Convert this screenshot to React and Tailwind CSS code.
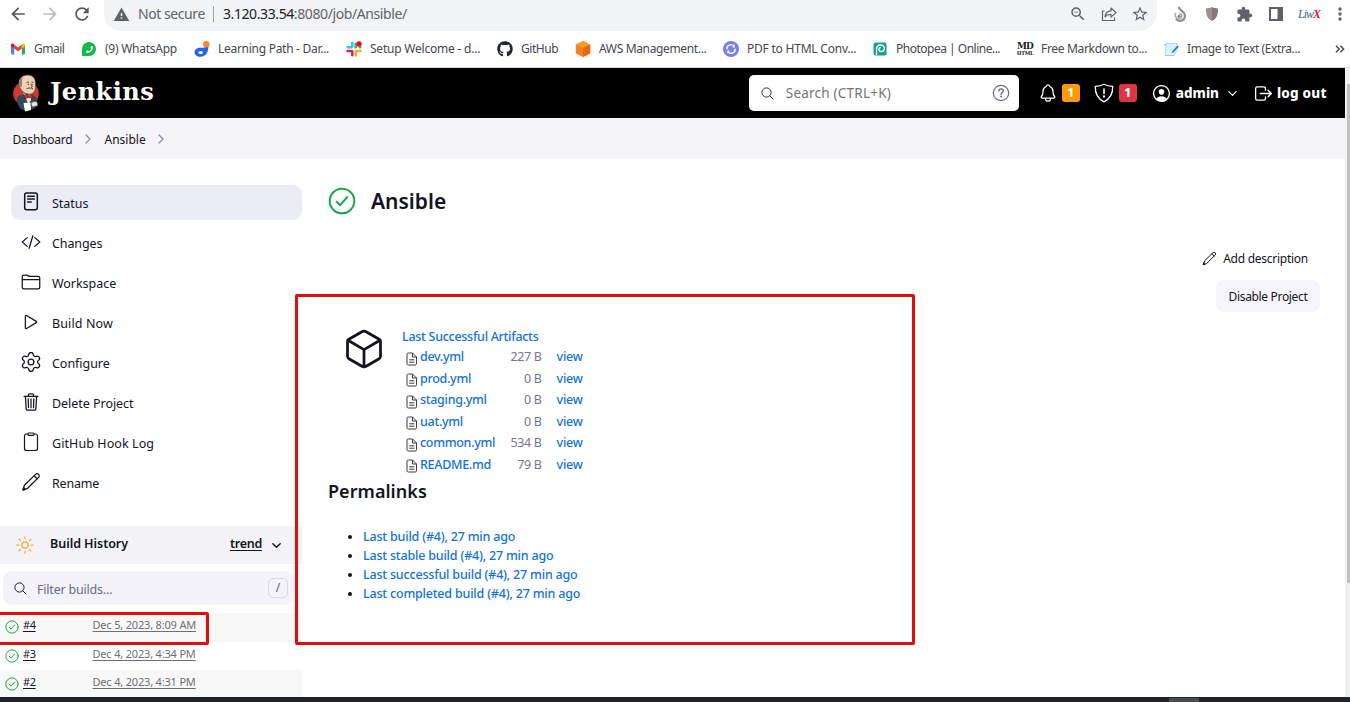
import React from "react";
import {
  IoCodeSlashOutline,
  IoFolderOutline,
  IoPlayOutline,
  IoTrashOutline,
  IoSunnyOutline,
  IoSearchOutline,
  IoNotificationsOutline,
  IoPersonCircleOutline,
  IoChevronDownOutline,
  IoChevronForwardOutline,
  IoLogOutOutline,
  IoCubeOutline,
} from "react-icons/io5";
import {
  MdArrowBack,
  MdArrowForward,
  MdRefresh,
  MdWarning,
  MdZoomOut,
  MdStarBorder,
  MdMoreVert,
  MdExtension,
} from "react-icons/md";
import { FaGithub, FaPhoneAlt } from "react-icons/fa";
import { Settings } from "lucide-react";

/* ---------- browser icons ---------- */

const ShareIcon = () => (
  <svg viewBox="0 0 16 16" className="size-4" fill="none" stroke="#5f6368" strokeWidth="1.2">
    <path d="M3.500 5H1.500v9.500h12V11.500" />
    <path d="M4 10.800C4.400 7 6.600 5 10 4.800V2l5 4.600-5 4.500V8.400C7.300 8.300 5.400 9 4 10.800Z" strokeLinejoin="round" />
  </svg>
);

const SwirlIcon = () => (
  <svg viewBox="0 0 16 16" className="size-4" fill="none" strokeLinecap="round">
    <path d="M7 1.500c0 2.500 6 4 6 8.500a5 5 0 0 1-8.500 3.500" stroke="#8f9193" strokeWidth="2.200" />
    <path d="M3.500 7.500a4 4 0 0 0 2.500 5.200 3 3 0 0 0 4-2.700 2.300 2.300 0 0 0-2.600-2" stroke="#a7a9ab" strokeWidth="1.500" />
    <circle cx="7.200" cy="10.300" r="1.400" fill="#77797b" />
  </svg>
);

const UblockIcon = () => (
  <svg viewBox="0 0 16 16" className="size-4">
    <path d="M8 1c2 1 4 1.300 6 1.400 0 6-.8 9.600-6 12.600Z" fill="#85787a" />
    <path d="M8 1C6 2 4 2.300 2 2.400c0 6 .8 9.600 6 12.600Z" fill="#9c8f90" />
  </svg>
);

const SidePanelIcon = () => (
  <svg viewBox="0 0 14 14" className="size-3.5">
    <path fillRule="evenodd" d="M0 0h14v14H0ZM2 2v10h6.500V2Z" fill="#5f6368" />
  </svg>
);

const GmailIcon = () => (
  <svg viewBox="0 0 16 16" className="size-4">
    <path d="M1 4.500v8c0 .5.400.9.900.9H4.200V7Z" fill="#4285f4" />
    <path d="M15 4.500v8c0 .5-.4.9-.9.9h-2.300V7Z" fill="#34a853" />
    <path d="M11.800 4v3.500L15 5.200V4c0-1.300-1.400-1.900-2.400-1.200Z" fill="#fbbc04" />
    <path d="M4.200 7.500V3.600L8 6.500l3.800-2.900v3.900L8 10.400Z" fill="#ea4335" />
    <path d="M1 4v1.200l3.200 2.300V3.600L3.400 2.800C2.400 2.100 1 2.700 1 4Z" fill="#c5221f" />
  </svg>
);

const WhatsAppIcon = () => (
  <span className="flex size-[14px] items-center justify-center rounded-full rounded-bl-[3px] bg-[#12b84a]">
    <FaPhoneAlt className="size-[7px] -scale-x-100 text-white" />
  </span>
);

const LearningIcon = () => (
  <svg viewBox="0 0 16 16" className="size-4">
    <path d="M14.400 4.500c.2 6-2 11.200-8 11.300C3 15.800.5 14 .5 11.300S3 6.800 6.600 6.800c4 0 6-.6 7.800-2.300Z" fill="#2563eb" />
    <circle cx="12.300" cy="3.200" r="3.200" fill="#fb8332" />
    <ellipse cx="6.600" cy="11.500" rx="2.300" ry="1.500" fill="#fff" />
  </svg>
);

const SlackIcon = () => (
  <svg viewBox="0 0 16 16" className="size-4" strokeWidth="2.600" strokeLinecap="round">
    <path d="M6.300 1.800v3.700M1.500 6.200h4" stroke="#36c5f0" />
    <path d="M9.700 3V6.200M14 6.200h.3" stroke="#2eb67d" />
    <path d="M1.500 10h4.300M6.300 10.500v3.700" stroke="#e01e5a" />
    <path d="M10 10h4.500M10 10v4.500" stroke="#ecb22e" />
    <circle cx="13" cy="3" r="2.700" fill="#f20d0d" />
  </svg>
);

const CubeIcon = () => (
  <svg viewBox="0 0 16 16" className="size-4">
    <path d="M8 0l7.200 3.500v9L8 16 .8 12.500v-9Z" fill="#f58220" />
    <path d="M8 0l7.200 3.500L8 6.800.8 3.500Z" fill="#fb9c2d" />
    <path d="M8 6.800l7.200-3.300v9L8 16Z" fill="#e8661b" />
  </svg>
);

const ConvertIcon = () => (
  <svg viewBox="0 0 16 16" className="size-4" fill="none">
    <circle cx="8" cy="8" r="8" fill="#7a7ff0" />
    <path d="M3.800 8.300A4.200 4.200 0 0 1 11 5M12.200 7.700A4.200 4.200 0 0 1 5 11" stroke="#fff" strokeWidth="1.400" />
    <path d="M11.800 3.400v3H9ZM4.200 12.600v-3H7Z" fill="#fff" />
  </svg>
);

const PhotopeaIcon = () => (
  <svg viewBox="0 0 16 16" className="size-4" fill="none">
    <rect x="1.500" y="1.500" width="13" height="13" rx="2" fill="#18a085" />
    <path d="M4.500 14V8.500C4.500 5.700 6.200 4 8.600 4c2.300 0 3.700 1.500 3.700 3.400 0 1.800-1.300 3.100-3 3.100-1.500 0-2.400-1-2.400-2.200 0-1 .7-1.800 1.800-1.800" stroke="#fff" strokeWidth="1.300" />
  </svg>
);

const MarkdownIcon = () => (
  <span className="flex size-4 flex-col items-center justify-center font-['DejaVu_Serif',serif] font-bold text-[#222]">
    <span className="text-[9px] leading-[9px] tracking-[-0.8px]">MD</span>
    <span className="text-[5px] leading-[5px] tracking-[-0.3px]">HTML</span>
  </span>
);

const NoteIcon = () => (
  <svg viewBox="0 0 16 16" className="size-4">
    <path d="M3 2.500h11v7l-3 5H2Z" fill="#d9f3fb" stroke="#8fdcf2" strokeWidth=".8" />
    <path d="M1 3.500h3M2 14.500h9" stroke="#7fd6f0" />
    <path d="M14.500 4.500l-5 5.500-.8 2 2-.8 5-5.500Z" fill="#2a6fd6" />
  </svg>
);

const bookmarks = [
  { label: "Gmail", Icon: GmailIcon, width: "w-[71px]", track: "tracking-[-0.5px]" },
  { label: "(9) WhatsApp", Icon: WhatsAppIcon, width: "w-[113px]", track: "tracking-[-0.25px]" },
  { label: "Learning Path - Dar...", Icon: LearningIcon, width: "w-[152px]", track: "tracking-[-0.28px]" },
  { label: "Setup Welcome - d...", Icon: SlackIcon, width: "w-[151px]", track: "tracking-[-0.22px]" },
  { label: "GitHub", Icon: () => <FaGithub className="size-4 text-[#24292f]" />, width: "w-[78px]", track: "tracking-[-0.45px]" },
  { label: "AWS Management...", Icon: CubeIcon, width: "w-[148px]", track: "tracking-[-0.35px]" },
  { label: "PDF to HTML Conv...", Icon: ConvertIcon, width: "w-[149px]", track: "tracking-[-0.22px]" },
  { label: "Photopea | Online...", Icon: PhotopeaIcon, width: "w-[145px]", track: "tracking-[-0.5px]" },
  { label: "Free Markdown to...", Icon: MarkdownIcon, width: "w-[146px]", track: "tracking-[-0.32px]" },
  { label: "Image to Text (Extra...", Icon: NoteIcon, width: "w-[172px]", track: "tracking-[-0.4px]" },
];

function BrowserChrome() {
  return (
    <div className="flex h-[68px] shrink-0 flex-col border-b border-[#d5d7da] bg-white text-[#5f6368]">
      <div className="flex h-[31px]">
        <div className="flex w-[104px] items-center pb-[3px] pl-2 text-[20px]">
          <MdArrowBack className="text-[#54575b]" />
          <MdArrowForward className="ml-3 text-[#babcbe]" />
          <MdRefresh className="ml-3 text-[#54575b]" />
        </div>
        <div className="flex w-[1054px] items-center rounded-b-[18px] bg-[#f1f3f4] pb-[3px] pl-[9px] text-[14px]">
          <MdWarning className="size-[17px]" />
          <span className="ml-2 w-[67px] pb-px whitespace-nowrap tracking-[-0.42px]">Not secure</span>
          <span className="ml-2 h-4 w-px bg-[#9aa0a6]" />
          <span className="ml-[9px] pb-px whitespace-nowrap tracking-[-0.4px]">
            <span className="text-[#202124]">3.120.33.54</span>:8080/job/Ansible/
          </span>
          <div className="mr-2 ml-auto flex items-center gap-[14px]">
            <MdZoomOut className="size-[18px]" />
            <ShareIcon />
            <MdStarBorder className="size-[18px]" />
          </div>
        </div>
        <div className="flex items-center pb-[3px] pl-[15px]">
          <SwirlIcon />
          <span className="ml-4"><UblockIcon /></span>
          <MdExtension className="ml-4 size-[17px]" />
          <span className="ml-4"><SidePanelIcon /></span>
          <span className="ml-3.5 w-6 text-center font-['Liberation_Serif',serif] text-[12px] leading-4 tracking-[-1px] italic">
            <span className="text-[#35648f]">Liw</span>
            <span className="font-bold text-[#e0203c]">X</span>
          </span>
          <MdMoreVert className="ml-[9px] size-[20px] shrink-0" />
        </div>
      </div>
      <div className="flex h-9 items-center pl-[10px] text-[12px] text-[#45484c]">
        {bookmarks.map(({ label, Icon, width, track }) => (
          <div key={label} className={`flex shrink-0 items-center gap-2 ${width}`}>
            <span className="flex size-4 shrink-0 items-center justify-center"><Icon /></span>
            <span className={`whitespace-nowrap ${track}`}>{label}</span>
          </div>
        ))}
        <svg viewBox="0 0 10 8" className="h-2 w-2.5 shrink-0" fill="none" stroke="#4a4d51" strokeWidth="1.500">
          <path d="M1 .800 4.200 4 1 7.200M5.400.800 8.600 4 5.400 7.200" />
        </svg>
      </div>
    </div>
  );
}

/* ---------- Jenkins header ---------- */

const Butler = () => (
  <svg viewBox="0 0 28 38" className="h-[38px] w-7">
    <ellipse cx="14" cy="19.500" rx="12.800" ry="12.500" fill="#cf3a34" />
    <path d="M5 24c2-3 5-4 8-4 5 0 10 1 11.500 4l.8 7-3 3.500c-5 2-9 2-13 1C6.500 32.500 4.500 28 5 24Z" fill="#34495c" />
    <path d="M11 18.500l4.500 3.500 3.500-1.500v6l-3 2.500Z" fill="#f4ece3" />
    <path d="M7 9c0-5 4-8 8.500-8 5 0 8 3 8 8.500 0 4 0 6.500-1.500 8.500-1.500 2-3.500 2.500-6 2-4-.8-6-2.500-7.500-5.500C7 13 7 11 7 9Z" fill="#f2d2ae" stroke="#40352f" strokeWidth=".6" />
    <path d="M6.800 10C6.500 6 8.500 3 11.500 1.700 10 4 9.800 6 10.200 9L9.600 13.500l-2-1Z" fill="#8d8579" />
    <path d="M14.500 8.500l2.500-.6M19.500 8l2 .4M18.800 9.500l1.600 3.300-1.400.4M14.500 14.800c2-1.200 4.500-1 6.500 0" stroke="#40352f" strokeWidth=".9" fill="none" />
    <circle cx="16.300" cy="10.200" r=".6" fill="#222" />
    <circle cx="20.800" cy="10.200" r=".5" fill="#222" />
    <path d="M12.500 20.500l4 1.600 4-1.600.6 4-4.400-1-4 1.500Z" fill="#d8242c" stroke="#3a1d1d" strokeWidth=".4" />
    <path d="M11.500 29l7-.8.5 7.800-6 1.500Z" fill="#fff" />
    <path d="M19 29.500c2-2.300 4.500-2.500 6.500-1l.3 3.200-5.500 1.300Z" fill="#f1e3d2" stroke="#40352f" strokeWidth=".5" />
  </svg>
);

const HelpIcon = () => (
  <svg viewBox="0 0 18 18" className="size-[18px]" fill="none" stroke="#6d6c86" strokeWidth="1.200" strokeLinecap="round">
    <circle cx="9" cy="9" r="7.700" />
    <path d="M6.800 7c.1-1.300 1-2 2.200-2s2.200.8 2.200 1.900c0 1.500-2.100 1.500-2.100 3.300" strokeWidth="1.400" />
    <circle cx="9.100" cy="12.600" r=".4" fill="#6d6c86" />
  </svg>
);

const ShieldIcon = () => (
  <svg viewBox="0 0 20 20" className="size-5" fill="none" stroke="#fff" strokeWidth="1.300" strokeLinecap="round" strokeLinejoin="round">
    <path d="M10 1.200C7.500 2.700 4.500 3.200 1.300 3.300c-.3 7 1.700 12 8.700 15.500 7-3.500 9-8.500 8.700-15.500-3.200-.1-6.200-.6-8.700-2.100Z" />
    <path d="M10 6v4.500" strokeWidth="1.600" />
    <circle cx="10" cy="13.500" r=".5" fill="#fff" />
  </svg>
);

function Header() {
  return (
    <header className="flex h-[50px] shrink-0 items-center bg-black pr-[17px] pl-3 text-white">
      <Butler />
      <span className="ml-[10px] pb-[3px] font-['DejaVu_Serif',serif] text-[24px] leading-none font-bold tracking-[0.5px]">
        Jenkins
      </span>
      <div className="ml-auto flex h-9 w-[270px] items-center rounded-[5px] bg-white pr-[9px] pl-[11px]">
        <IoSearchOutline className="size-[15px] text-[#222]" />
        <span className="ml-[11px] text-[13.500px] tracking-[0.220px] text-[#757575]">Search (CTRL+K)</span>
        <span className="ml-auto"><HelpIcon /></span>
      </div>
      <IoNotificationsOutline className="ml-[19px] size-5" />
      <span className="ml-[4px] flex h-[18px] w-[18px] items-center justify-center rounded-[3px] bg-[#fe9a05] text-[13px] font-bold">1</span>
      <span className="ml-[14px]"><ShieldIcon /></span>
      <span className="ml-[5px] flex h-[18px] w-[18px] items-center justify-center rounded-[3px] bg-[#dc3545] text-[13px] font-bold">1</span>
      <IoPersonCircleOutline className="ml-[14px] size-[21px]" />
      <span className="ml-1 text-[13.500px] font-extrabold">admin</span>
      <IoChevronDownOutline className="ml-[7px] size-[13px]" />
      <IoLogOutOutline className="ml-[14px] size-[21px]" />
      <span className="ml-[3px] w-[51px] text-[13.500px] font-extrabold tracking-[0.200px] whitespace-nowrap">log out</span>
    </header>
  );
}

function Breadcrumbs() {
  return (
    <nav className="flex h-[41px] shrink-0 items-center bg-[#f4f4f9] pt-[3px] pl-[12.500px] text-[12px] text-[#14141f]">
      <span className="w-[60px] tracking-[-0.240px]">Dashboard</span>
      <IoChevronForwardOutline className="mb-[3px] ml-[8px] size-[14px] text-[#8f8fa3]" />
      <span className="ml-[10px] w-[41px]">Ansible</span>
      <IoChevronForwardOutline className="mb-[3px] ml-[8px] size-[14px] text-[#8f8fa3]" />
    </nav>
  );
}

/* ---------- shared Jenkins symbols ---------- */

const SuccessIcon = ({ className }) => (
  <svg viewBox="0 0 32 32" className={className} fill="none" stroke="#1ea64b" strokeWidth="2" strokeLinecap="round" strokeLinejoin="round">
    <circle cx="16" cy="16" r="12.300" />
    <path d="M10.700 16.800l3.500 3.400 7-8.200" />
  </svg>
);

const StatusIcon = ({ className }) => (
  <svg viewBox="0 0 20 20" className={className} fill="none" stroke="currentColor" strokeWidth="1.500" strokeLinecap="round">
    <rect x="3.700" y="1" width="12.600" height="16.800" rx="2" />
    <path d="M6.700 4.300h6.600M6.700 7h6.600M6.700 9.900h3.500" />
  </svg>
);

const PencilIcon = ({ className }) => (
  <svg viewBox="0 0 20 20" className={className} fill="none" stroke="currentColor" strokeWidth="1.300" strokeLinejoin="round" strokeLinecap="round">
    <path d="M2 18l1.400-4.800L14.600 2.400a2.100 2.100 0 0 1 3 3L6.600 16.300Z" />
    <path d="M13.200 3.900l2.900 2.900M2 18l2.300-.6-1.600-1.700Z" />
  </svg>
);

const ClipboardIcon = ({ className }) => (
  <svg viewBox="0 0 20 20" className={className} fill="none" stroke="currentColor" strokeWidth="1.200" strokeLinejoin="round">
    <path d="M7 2H5.500a2 2 0 0 0-2 2v12.500a2 2 0 0 0 2 2h9a2 2 0 0 0 2-2V4a2 2 0 0 0-2-2H13" />
    <rect x="7" y="1" width="6" height="2.400" rx="1" />
  </svg>
);

const GearIcon = ({ className }) => <Settings viewBox="1.500 1.500 21 21" className={className} strokeWidth={1.4} />;

/* ---------- side panel ---------- */

const tasks = [
  { label: "Status", Icon: StatusIcon, active: true },
  { label: "Changes", Icon: IoCodeSlashOutline, track: "tracking-[-0.1px]" },
  { label: "Workspace", Icon: IoFolderOutline },
  { label: "Build Now", Icon: IoPlayOutline, track: "tracking-[0.12px]" },
  { label: "Configure", Icon: GearIcon },
  { label: "Delete Project", Icon: IoTrashOutline },
  { label: "GitHub Hook Log", Icon: ClipboardIcon, track: "tracking-[0.08px]" },
  { label: "Rename", Icon: PencilIcon, track: "tracking-[-0.2px]" },
];

const builds = [
  { id: "#4", date: "Dec 5, 2023, 8:09 AM", row: "h-[29px] bg-[#f8f8f8]" },
  { id: "#3", date: "Dec 4, 2023, 4:34 PM", row: "h-[28px] bg-white" },
  { id: "#2", date: "Dec 4, 2023, 4:31 PM", row: "h-[28px] bg-[#f8f8f8]" },
];

function SidePanel() {
  return (
    <aside className="flex w-[302px] shrink-0 flex-col pt-[26px] text-[#14141f]">
      <div className="flex flex-col gap-[5px] pl-[11px]">
        {tasks.map(({ label, Icon, active, track }) => (
          <div
            key={label}
            className={`flex h-[35px] items-center rounded-[9px] pl-[10px] text-[12.500px] ${active ? "bg-[#ececf5]" : ""}`}
          >
            <Icon className="mb-px size-5" />
            <span className={`ml-[11px] pt-[3px] ${track || "tracking-[-0.04px]"}`}>{label}</span>
          </div>
        ))}
      </div>
      <div className="mt-[26px] flex h-[38px] shrink-0 items-center bg-[#f3f3f8] pr-[19px] pl-[15px] text-[12.500px] font-semibold">
        <IoSunnyOutline className="size-5 text-[#f8a72c]" />
        <span className="ml-[15px] pb-[2px] tracking-[-0.040px]">Build History</span>
        <span className="ml-auto w-[32px] pb-[2px] tracking-[-0.280px] underline decoration-1 underline-offset-2">trend</span>
        <IoChevronDownOutline className="ml-[8px] size-[13px] [&_path]:[stroke-width:56px]" />
      </div>
      <div className="mt-[7px] mr-2 ml-[3px] flex h-[34px] shrink-0 items-center rounded-[9px] bg-[#f3f3f9] pr-[6px] pl-[10px]">
        <IoSearchOutline className="size-[15px]" />
        <span className="ml-[9px] pt-[4px] text-[12.500px] tracking-[-0.200px] text-[#6b6b85]">Filter builds...</span>
        <span className="ml-auto flex size-5 items-center justify-center rounded-[5px] border border-[#dadae6] text-[12px] text-[#5b5b70]">/</span>
      </div>
      <div className="mt-2 flex flex-col">
        {builds.map(({ id, date, row }) => (
          <div key={id} className={`flex shrink-0 items-center pl-1 text-[11px] ${row}`}>
            <SuccessIcon className="mb-px size-4" />
            <span className="ml-[3px] w-[69.500px] pb-[4px] tracking-[-0.400px] underline decoration-1 underline-offset-2">{id}</span>
            <span className="pb-[4px] tracking-[-0.180px] whitespace-nowrap text-[#6f6f73] underline decoration-1 underline-offset-2">{date}</span>
          </div>
        ))}
      </div>
    </aside>
  );
}

/* ---------- main panel ---------- */

const FileIcon = () => (
  <svg viewBox="0 0 12 14" className="mt-[2px] ml-[3.500px] h-[14px] w-3" fill="none" stroke="#3b3b45" strokeWidth="1" strokeLinejoin="round">
    <path d="M1 2.200c0-.7.500-1.200 1.200-1.200H6.500L10.500 5v6.800c0 .7-.5 1.200-1.200 1.200H2.200C1.500 13 1 12.500 1 11.800Z" />
    <path d="M6.500 1v4h4M3.200 7.800h5.200M3.200 10.200h5.200" />
  </svg>
);

const artifacts = [
  { name: "dev.yml", size: "227 B" },
  { name: "prod.yml", size: "0 B" },
  { name: "staging.yml", size: "0 B" },
  { name: "uat.yml", size: "0 B" },
  { name: "common.yml", size: "534 B" },
  { name: "README.md", size: "79 B" },
];

const permalinks = [
  "Last build (#4), 27 min ago",
  "Last stable build (#4), 27 min ago",
  "Last successful build (#4), 27 min ago",
  "Last completed build (#4), 27 min ago",
];

function MainPanel() {
  return (
    <main className="flex flex-1 flex-col pr-[25px] pl-[26px] text-[#14141f]">
      <div className="mt-[26px] flex h-8 items-center">
        <SuccessIcon className="-ml-[2px] size-8" />
        <h1 className="ml-[13px] pt-[2px] text-[21px] font-semibold">Ansible</h1>
      </div>
      <div className="mt-[31px] flex h-[22px] items-center justify-end pr-3">
        <PencilIcon className="mb-[2px] size-[15px]" />
        <span className="ml-[6px] text-[12px] tracking-[-0.260px]">Add description</span>
      </div>
      <div className="mt-[10px] flex justify-end">
        <button className="flex h-8 w-[104px] items-center justify-center rounded-[9px] bg-[#f5f5fb] pt-px text-[12px] tracking-[-0.330px]">
          Disable Project
        </button>
      </div>
      <div className="mt-[14px] flex pl-[14px]">
        <IoCubeOutline className="mt-px size-[44px]" />
        <div className="ml-[16px] flex flex-col pt-px text-[12.500px] font-medium text-[#1273d9]">
          <span className="flex h-[20px] items-center tracking-[-0.280px]">Last Successful Artifacts</span>
          {artifacts.map(({ name, size }) => (
            <div key={name} className="flex h-[21.500px] items-center">
              <FileIcon />
              <span className="ml-[2.500px] w-[80.500px] tracking-[-0.300px]">{name}</span>
              <span className="w-[41px] text-right font-normal tracking-[-0.350px] text-[#77778c]">{size}</span>
              <span className="ml-[15px] tracking-[-0.200px]">view</span>
            </div>
          ))}
        </div>
      </div>
      <h2 className="mt-[1.600px] flex h-[27px] items-center text-[18px] font-semibold tracking-[0.050px]">Permalinks</h2>
      <ul className="mt-[22px] list-disc pl-[35px] text-[12.500px] leading-[19px] font-medium">
        {permalinks.map((text) => (
          <li key={text}>
            <span className="tracking-[-0.190px] text-[#1273d9]">{text}</span>
          </li>
        ))}
      </ul>
    </main>
  );
}

export default function App() {
  return (
    <div className="relative flex h-[702px] w-[1350px] flex-col overflow-hidden bg-white font-['Noto_Sans','Open_Sans',sans-serif]">
      <BrowserChrome />
      <div className="flex h-[629px] shrink-0">
        <div className="flex w-[1345px] flex-col overflow-hidden">
          <Header />
          <Breadcrumbs />
          <div className="flex flex-1">
            <SidePanel />
            <MainPanel />
          </div>
        </div>
        <div className="flex w-[5px] justify-end bg-[#f1f1f1] pt-4">
          <div className="h-[499px] w-[3px] bg-[#c1c1c1]" />
        </div>
      </div>
      <div className="flex h-[5px] bg-[#1f212b] pt-px">
        <div className="ml-[1169px] h-1 w-[30px] bg-[#484a52]" />
      </div>

      {/* highlight frames */}
      <div className="pointer-events-none absolute top-[294px] left-[295px] h-[351px] w-[620px] rounded-[2px] border-3 border-[#e60c0c]" />
      <div className="pointer-events-none absolute top-[612px] -left-[4px] h-[33px] w-[213px] rounded-[2px] border-3 border-[#e60c0c]" />
    </div>
  );
}
